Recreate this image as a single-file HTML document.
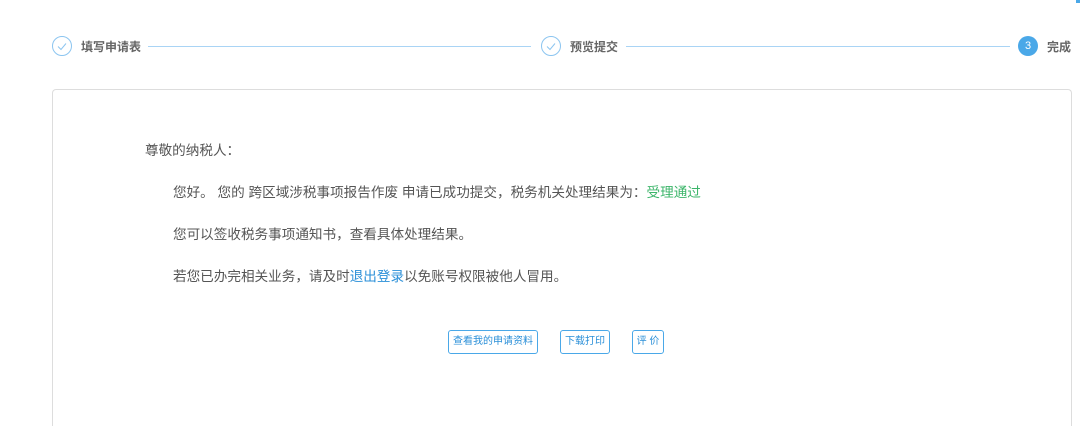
<!DOCTYPE html>
<html style="height:426px;overflow:hidden"><head><meta charset="utf-8"><style>
body{margin:0;width:1080px;height:426px;background:#fff;font-family:"Liberation Sans","Noto Sans CJK SC",sans-serif;position:relative;overflow:hidden;color:#555}
.a{position:absolute}
.c{width:20px;height:20px;border:1px solid #8cc5f0;border-radius:50%;box-sizing:border-box}
.l{height:1px;background:#a9d4f5}
.st{font-size:12px;font-weight:bold;color:#666}
.p{font-size:13.6px;color:#555;white-space:nowrap}
.b{border:1px solid #4aa8e8;border-radius:3px;color:#2a8fd8;font-size:10px;height:24px;line-height:22px;box-sizing:border-box;text-align:center}
</style></head><body>
<div class="a c" style="left:52px;top:36px"><svg width="18" height="18" viewBox="0 0 18 18"><path d="M5 9.5l3 3 5-6" stroke="#8cc5f0" fill="none" stroke-width="1"/></svg></div>
<div class="a st" style="left:81px;top:38px">填写申请表</div>
<div class="a l" style="left:148px;top:46px;width:383px"></div>
<div class="a c" style="left:541px;top:36px"><svg width="18" height="18" viewBox="0 0 18 18"><path d="M5 9.5l3 3 5-6" stroke="#8cc5f0" fill="none" stroke-width="1"/></svg></div>
<div class="a st" style="left:570px;top:38px">预览提交</div>
<div class="a l" style="left:626px;top:46px;width:384px"></div>
<div class="a" style="left:1018px;top:36px;width:20px;height:20px;border-radius:50%;background:#4aa8e8;color:#fff;font-size:11px;line-height:20px;text-align:center">3</div>
<div class="a st" style="left:1047px;top:38px">完成</div>
<div class="a" style="left:1076px;top:0;width:4px;height:3px;background:#4aa8e8"></div>
<div class="a" style="left:52px;top:89px;width:1020px;height:337px;border:1px solid #ddd;border-bottom:none;border-radius:4px 4px 0 0;box-sizing:border-box"></div>
<div class="a p" style="left:145px;top:139px">尊敬的纳税人：</div>
<div class="a p" style="left:173px;top:181px">您好。 您的 跨区域涉税事项报告作废 申请已成功提交，税务机关处理结果为：<span style="color:#3cb56a">受理通过</span></div>
<div class="a p" style="left:173px;top:223px">您可以签收税务事项通知书，查看具体处理结果。</div>
<div class="a p" style="left:173px;top:265px">若您已办完相关业务，请及时<span style="color:#2a8fd8">退出登录</span>以免账号权限被他人冒用。</div>
<div class="a b" style="left:448px;top:330px;width:90px">查看我的申请资料</div>
<div class="a b" style="left:560px;top:330px;width:50px">下载打印</div>
<div class="a b" style="left:632px;top:330px;width:32px">评 价</div>
</body></html>
